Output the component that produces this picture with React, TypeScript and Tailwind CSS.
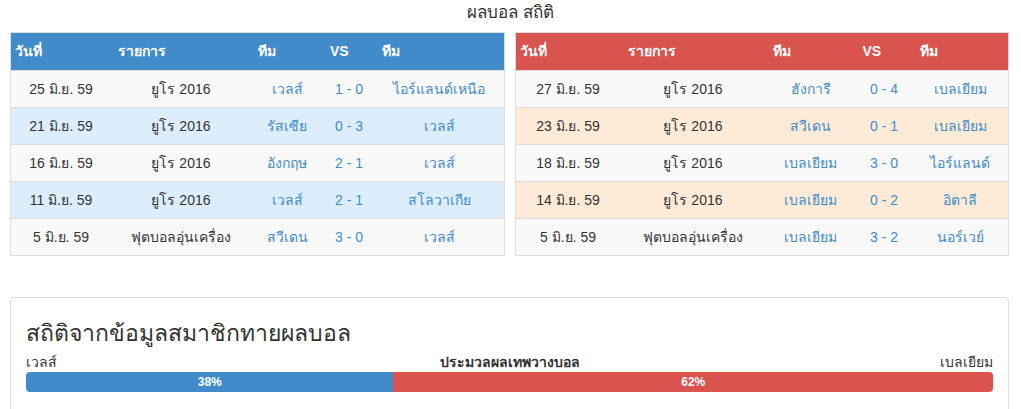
import React from "react";

type Row = [string, string, string, string, string];

const leftRows: Row[] = [
  ["25 มิ.ย. 59", "ยูโร 2016", "เวลส์", "1 - 0", "ไอร์แลนด์เหนือ"],
  ["21 มิ.ย. 59", "ยูโร 2016", "รัสเซีย", "0 - 3", "เวลส์"],
  ["16 มิ.ย. 59", "ยูโร 2016", "อังกฤษ", "2 - 1", "เวลส์"],
  ["11 มิ.ย. 59", "ยูโร 2016", "เวลส์", "2 - 1", "สโลวาเกีย"],
  ["5 มิ.ย. 59", "ฟุตบอลอุ่นเครื่อง", "สวีเดน", "3 - 0", "เวลส์"],
];

const rightRows: Row[] = [
  ["27 มิ.ย. 59", "ยูโร 2016", "ฮังการี", "0 - 4", "เบลเยียม"],
  ["23 มิ.ย. 59", "ยูโร 2016", "สวีเดน", "0 - 1", "เบลเยียม"],
  ["18 มิ.ย. 59", "ยูโร 2016", "เบลเยียม", "3 - 0", "ไอร์แลนด์"],
  ["14 มิ.ย. 59", "ยูโร 2016", "เบลเยียม", "0 - 2", "อิตาลี"],
  ["5 มิ.ย. 59", "ฟุตบอลอุ่นเครื่อง", "เบลเยียม", "3 - 2", "นอร์เวย์"],
];

const headers = ["วันที่", "รายการ", "ทีม", "VS", "ทีม"];

function ResultTable({
  rows,
  widths,
  headClass,
  altClass,
}: {
  rows: Row[];
  widths: number[];
  headClass: string;
  altClass: string;
}) {
  return (
    <div className="flex-1 border border-[#dddddd]">
      <div className={`flex h-[37px] items-center text-white font-bold text-[14px] ${headClass}`}>
        {headers.map((h, i) => (
          <div key={i} style={{ width: widths[i] }} className={i === 0 ? "pl-[4px]" : "pl-[7px]"}>
            {h}
          </div>
        ))}
      </div>
      {rows.map((r, ri) => (
        <div
          key={ri}
          className={`flex h-[37px] items-center text-[14px] border-t border-[#dddddd] ${
            ri % 2 === 1 ? altClass : "bg-[#f9f9f9]"
          }`}
        >
          {r.map((c, ci) => (
            <div
              key={ci}
              style={{ width: widths[ci] }}
              className={`text-center whitespace-nowrap ${
                ci >= 2 ? "text-[#428bca]" : "text-[#333333]"
              }`}
            >
              {c}
            </div>
          ))}
        </div>
      ))}
    </div>
  );
}

export default function App() {
  return (
    <div
      className="w-[1021px] h-[409px] bg-white overflow-hidden px-[10px] text-[#333333]"
      style={{ fontFamily: '"Liberation Sans", Arial, "Noto Sans", sans-serif' }}
    >
      <div className="text-center text-[17px] leading-[26px] pt-[0px]">ผลบอล สถิติ</div>
      <div className="flex gap-[10px] mt-[6px] pr-[2px]">
        <ResultTable
          rows={leftRows}
          widths={[100, 140, 72, 52, 128]}
          headClass="bg-[#428bca]"
          altClass="bg-[#dcedfb]"
        />
        <ResultTable
          rows={rightRows}
          widths={[105, 145, 90, 57, 95]}
          headClass="bg-[#d9534f]"
          altClass="bg-[#fdebd8]"
        />
      </div>
      <div className="mt-[41px] mr-[2px] h-[140px] border border-[#dddddd] rounded-[4px] px-[15px] pt-[18px]">
        <div className="text-[23px] leading-[34px]">สถิติจากข้อมูลสมาชิกทายผลบอล</div>
        <div className="grid grid-cols-[1fr_auto_1fr] text-[14px] leading-[18px] mt-[3px]">
          <span>เวลส์</span>
          <span className="font-bold">ประมวลผลเทพวางบอล</span>
          <span className="text-right">เบลเยียม</span>
        </div>
        <div className="flex h-[20px] mt-[1px] rounded-[4px] overflow-hidden text-white font-bold text-[12px] leading-[20px]">
          <div className="bg-[#428bca] text-center" style={{ width: "38%" }}>
            38%
          </div>
          <div className="bg-[#d9534f] text-center" style={{ width: "62%" }}>
            62%
          </div>
        </div>
      </div>
    </div>
  );
}
